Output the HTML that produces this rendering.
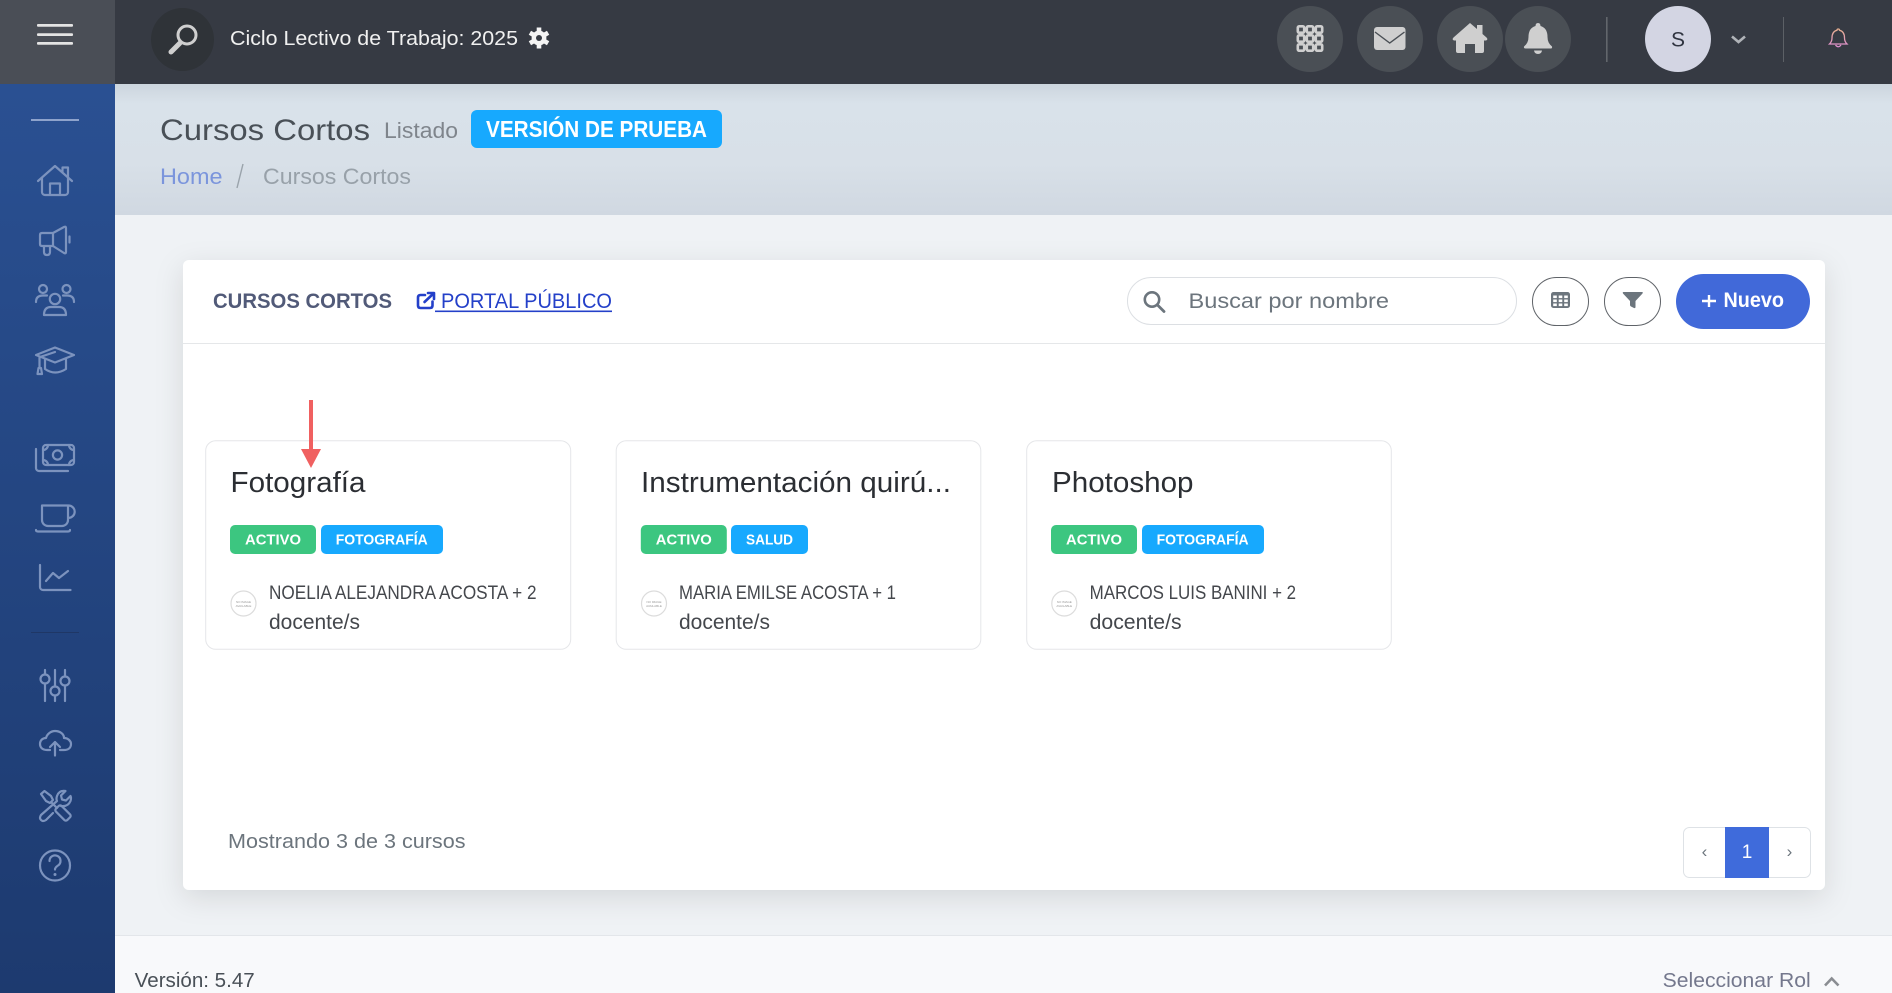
<!DOCTYPE html>
<html lang="es"><head><meta charset="utf-8"><title>Cursos Cortos</title>
<style>
html,body{margin:0;padding:0;width:1892px;height:993px;overflow:hidden;background:#eff2f5}
svg{display:block;position:absolute;left:0;top:0}
text{font-family:"Liberation Sans",sans-serif;white-space:pre}
.b{font-weight:700}
.si{fill:none;stroke:#7c93be;stroke-width:2.2;stroke-linecap:round;stroke-linejoin:round}
.card{fill:#fff;stroke:#e5e6e9;stroke-width:1}
.tt{font-size:28.5px;fill:#2b2e33}
.bd{font-size:15px;font-weight:700;fill:#fff}
.nm{font-size:19.5px;fill:#44474c}
.dc{font-size:21px;fill:#44474c}
.tiny{font-size:3px;fill:#999}
</style></head><body>
<svg width="1892" height="993" viewBox="0 0 1892 993" xmlns="http://www.w3.org/2000/svg">
<defs>
<linearGradient id="side" x1="0" y1="0" x2="0" y2="1"><stop offset="0" stop-color="#2a5092"/><stop offset="1" stop-color="#1d3a6f"/></linearGradient>
<linearGradient id="head" x1="0" y1="0" x2="0" y2="1"><stop offset="0" stop-color="#ccd5de"/><stop offset=".15" stop-color="#d9e2ea"/><stop offset=".6" stop-color="#d8e0e8"/><stop offset="1" stop-color="#d0d8e1"/></linearGradient>
<linearGradient id="pink" x1="0" y1="0" x2="0" y2="1"><stop offset="0" stop-color="#e8b08f"/><stop offset="1" stop-color="#de8fd0"/></linearGradient>
<filter id="sh" x="-5%" y="-10%" width="110%" height="125%"><feDropShadow dx="0" dy="8" stdDeviation="14" flood-color="#000" flood-opacity=".11"/></filter>
</defs>

<!-- backgrounds -->
<rect x="115" y="84" width="1777" height="852" fill="#eff2f5"/>
<rect x="115" y="84" width="1777" height="131" fill="url(#head)"/>
<rect x="115" y="935.5" width="1777" height="57.5" fill="#f8f9fb"/>
<rect x="115" y="935" width="1777" height="1" fill="#e3e6ea"/>
<rect x="0" y="84" width="115" height="909" fill="url(#side)"/>
<rect x="0" y="0" width="1892" height="84" fill="#363a43"/>
<rect x="0" y="0" width="115" height="84" fill="#4a4e56"/>

<!-- top bar left -->
<g fill="#e4e4e4"><rect x="37" y="24" width="36" height="2.8" rx="1"/><rect x="37" y="33.2" width="36" height="2.8" rx="1"/><rect x="37" y="42" width="36" height="2.8" rx="1"/></g>
<circle cx="182.5" cy="39.5" r="31.5" fill="#2f3338"/>
<circle cx="187" cy="35" r="9" fill="none" stroke="#cfcfcf" stroke-width="3"/>
<path d="M180 43 L171 52" stroke="#cfcfcf" stroke-width="5" stroke-linecap="round"/>
<text x="230" y="45" font-size="20.5" fill="#f0f0f0" textLength="288" lengthAdjust="spacingAndGlyphs">Ciclo Lectivo de Trabajo: 2025</text>
<g transform="translate(539 38)">
<g stroke="#f4f4f4" stroke-width="4.6" stroke-linecap="butt"><path d="M0 -10.5V10.5"/><path d="M-9.1 -5.25L9.1 5.25"/><path d="M-9.1 5.25L9.1 -5.25"/></g>
<circle r="7.4" fill="#f4f4f4"/><circle r="3" fill="#363a43"/></g>

<!-- top bar right -->
<g fill="#4a4f55"><circle cx="1310" cy="39" r="33"/><circle cx="1390" cy="39" r="33"/><circle cx="1470" cy="39" r="33"/><circle cx="1538" cy="39" r="33"/></g>
<g fill="none" stroke="#cfcfcf" stroke-width="2.6">
<rect x="1297.8" y="26.3" width="6.4" height="6.4" rx="1.3"/><rect x="1306.8" y="26.3" width="6.4" height="6.4" rx="1.3"/><rect x="1315.8" y="26.3" width="6.4" height="6.4" rx="1.3"/>
<rect x="1297.8" y="35.3" width="6.4" height="6.4" rx="1.3"/><rect x="1306.8" y="35.3" width="6.4" height="6.4" rx="1.3"/><rect x="1315.8" y="35.3" width="6.4" height="6.4" rx="1.3"/>
<rect x="1297.8" y="44.3" width="6.4" height="6.4" rx="1.3"/><rect x="1306.8" y="44.3" width="6.4" height="6.4" rx="1.3"/><rect x="1315.8" y="44.3" width="6.4" height="6.4" rx="1.3"/>
</g>
<rect x="1374" y="27" width="31.5" height="23" rx="3" fill="#cfcfcf"/>
<path d="M1375 32 L1389.7 43 L1404.5 32" fill="none" stroke="#4a4f55" stroke-width="1.4"/>
<path fill="#cfcfcf" d="M1470 23 L1477 29 V25 H1482.5 V34 L1486.5 37.5 Q1488.5 39.5 1486 40.5 H1484 V51 Q1484 53 1482 53 H1475 V44 H1465 V53 H1458 Q1456 53 1456 51 V40.5 H1454 Q1451.5 39.5 1453.5 37.5 Z"/>
<path fill="#cfcfcf" d="M1538 23 Q1540.5 23 1540.5 26 Q1547.5 28 1547.5 37 Q1547.5 43 1552 46.5 Q1552.5 48.5 1550.5 48.5 H1525.5 Q1523.5 48.5 1524 46.5 Q1528.5 43 1528.5 37 Q1528.5 28 1535.5 26 Q1535.5 23 1538 23 Z"/>
<path fill="#cfcfcf" d="M1534 50.5 H1542 Q1541.5 54 1538 54 Q1534.5 54 1534 50.5 Z"/>
<rect x="1606" y="17" width="1.6" height="45" fill="#62666c"/>
<circle cx="1678" cy="39" r="33" fill="#d3d5e3"/>
<text x="1678" y="46.5" font-size="21" fill="#2f3440" text-anchor="middle">S</text>
<path d="M1732 36.5 L1738.5 42 L1745 36.5" fill="none" stroke="#b0b3b8" stroke-width="2.6"/>
<rect x="1783" y="17" width="1" height="45" fill="#5c6066"/>
<path d="M1838.2 29 Q1839.5 29 1839.5 30.3 Q1844.5 31.5 1844.5 38 Q1844.5 41.5 1847 44 H1829.5 Q1832 41.5 1832 38 Q1832 31.5 1837 30.3 Q1837 29 1838.2 29 Z M1835.5 45 Q1838.2 48.5 1841 45" fill="none" stroke="url(#pink)" stroke-width="1.3"/>

<!-- sidebar -->
<rect x="31" y="119" width="48" height="2" fill="#8ea3cc"/>
<g class="si">
<path d="M38 181 L55 166 L72 181 M62.5 172.5 V167.5 H68 V177.5 M42 178 V192 a3 3 0 0 0 3 3 H65 a3 3 0 0 0 3-3 V178 M50 195 V183.5 H60 V195"/>
<path d="M53 233 L64 227 Q66 226 66 228 V252 Q66 254 64 253 L53 246 H42 Q40 246 40 244 V235 Q40 233 42 233 Z M53 233 V246 M44 246 V252 Q44 255 47 255 Q50 255 50 252 V246.5 M69.5 236.5 V242.5"/>
<circle cx="43" cy="289" r="4"/><circle cx="66.5" cy="289" r="4"/><circle cx="55" cy="299" r="5.2"/>
<path d="M44 315 Q44 307 51 307 H59 Q66 307 66 315 Z M36 302 Q36 295.5 43 295.5 H47 M74 302 Q74 295.5 67 295.5 H63"/>
<path d="M36 355 L55 347.5 L74 355 L55 362.5 Z M45 359.5 V369 Q55 376 66 369 V359.5 M40 357 L55 352 M39.5 357 V368 M37.5 374 L38.5 368 H41 L42 374 Z"/>
<rect x="43" y="445" width="31" height="20" rx="3"/><circle cx="57.5" cy="455" r="4.6"/>
<path d="M43 450 a5 5 0 0 0 5-5 M74 450 a5 5 0 0 1-5-5 M43 460 a5 5 0 0 1 5 5 M74 460 a5 5 0 0 0-5 5 M36 449 V468 a3 3 0 0 0 3 3 H68"/>
<path d="M42 505.5 H68 V520 a6 6 0 0 1-6 6 H48 a6 6 0 0 1-6-6 Z M68 505.5 H68.5 a6.2 6.2 0 0 1 0 12.4 H68 M36 530 Q36 531.5 38 531.5 H68 Q70 531.5 70 530"/>
<path d="M40 565 V587 a3 3 0 0 0 3 3 H70.5 M46 581 L53 573 L59 578 L68 571"/>
<path d="M45 670 V674.5 M45 683.5 V701 M55 670 V686.5 M55 695.5 V701 M65 670 V676.5 M65 685.5 V701"/>
<circle cx="45" cy="679" r="4.5"/><circle cx="55" cy="691" r="4.5"/><circle cx="65" cy="681" r="4.5"/>
<path d="M50 750 H47 C42 750 40 747 40 744 C40 740 43 738 46 738 C47 734 51 731 55 731 C60 731 64 734 64 738 C68 738 71 741 71 744 C71 748 68 750 64 750 H60 M55 755.5 V742 M50 747 L55 742 L60 747"/>
<path d="M41 794 L44.5 791 L51 796 L53 800 L50 803 L46 801 Z M52 803 L57 808"/>
<rect x="55" y="809" width="16" height="8" rx="2" transform="rotate(45 63 813)"/>
<path d="M70.5 796 L66 800.5 L62 799.5 L61 795.5 L65.5 791 Q59 790 57 796 Q56 799 57 801 L41 815 Q39 818 41 820 Q43 822 46 820 L53 813 M61 806 Q68 807 70.5 801 Q71.5 798 70.5 796"/>
<circle cx="55" cy="865.5" r="15"/>
<path d="M49.5 861 a5.5 5.5 0 1 1 8.5 4.5 q-3 2 -3 4"/>
</g>
<circle cx="55" cy="874.5" r="1.5" fill="#7c93be"/>
<rect x="31" y="632" width="48" height="1" fill="#1f3766"/>

<!-- page header -->
<text x="160" y="140" font-size="30" fill="#495057" textLength="210" lengthAdjust="spacingAndGlyphs">Cursos Cortos</text>
<text x="384" y="138" font-size="22" fill="#7f858c" textLength="74" lengthAdjust="spacingAndGlyphs">Listado</text>
<rect x="471" y="110" width="251" height="38" rx="6" fill="#17a9fe"/>
<text x="486" y="137" font-size="23" class="b" fill="#fff" textLength="221" lengthAdjust="spacingAndGlyphs">VERSIÓN DE PRUEBA</text>
<text x="160" y="184" font-size="22" fill="#7b95dc" textLength="62.5" lengthAdjust="spacingAndGlyphs">Home</text>
<path d="M243 164 L237 188" stroke="#9aa3ab" stroke-width="1.4"/>
<text x="263" y="184" font-size="22" fill="#98a1a9" textLength="148" lengthAdjust="spacingAndGlyphs">Cursos Cortos</text>

<!-- main card -->
<rect x="183" y="260" width="1642" height="630" rx="6" fill="#fff" filter="url(#sh)"/>
<rect x="183" y="343" width="1642" height="1" fill="#e5e7e9"/>
<text x="213" y="308" font-size="21.5" class="b" fill="#515a78" textLength="179" lengthAdjust="spacingAndGlyphs">CURSOS CORTOS</text>
<g fill="none" stroke="#2440c9" stroke-width="2.6" stroke-linecap="round" stroke-linejoin="round">
<path d="M425 295 H420.5 Q418 295 418 297.5 V305.5 Q418 308 420.5 308 H430 Q432.5 308 432.5 305.5 V301.5"/>
<path d="M424.5 302 L433.5 293.5 M428 293 H434 V299"/>
</g>
<text x="441" y="308" font-size="21.5" fill="#2440c9" textLength="171" lengthAdjust="spacingAndGlyphs">PORTAL PÚBLICO</text>
<rect x="435" y="310.5" width="177" height="1.6" fill="#2440c9"/>

<rect x="1127.5" y="277.5" width="389" height="47" rx="23.5" fill="#fff" stroke="#dcdfe3"/>
<circle cx="1152" cy="299.5" r="7.2" fill="none" stroke="#6c757d" stroke-width="2.6"/>
<path d="M1157.5 305 L1164 311.5" stroke="#6c757d" stroke-width="2.8" stroke-linecap="round"/>
<text x="1188.5" y="308" font-size="21.5" fill="#6c757d" textLength="200.5" lengthAdjust="spacingAndGlyphs">Buscar por nombre</text>

<rect x="1532.5" y="277.5" width="56" height="48" rx="24" fill="#fff" stroke="#5f6368"/>
<rect x="1551" y="292" width="19" height="16" rx="2.5" fill="#6c757d"/>
<g fill="#fff"><rect x="1553.2" y="295.5" width="3.6" height="2.6"/><rect x="1558.7" y="295.5" width="3.6" height="2.6"/><rect x="1564.2" y="295.5" width="3.6" height="2.6"/><rect x="1553.2" y="299.5" width="3.6" height="2.6"/><rect x="1558.7" y="299.5" width="3.6" height="2.6"/><rect x="1564.2" y="299.5" width="3.6" height="2.6"/><rect x="1553.2" y="303.5" width="3.6" height="2.6"/><rect x="1558.7" y="303.5" width="3.6" height="2.6"/><rect x="1564.2" y="303.5" width="3.6" height="2.6"/></g>
<rect x="1604.5" y="277.5" width="56" height="48" rx="24" fill="#fff" stroke="#5f6368"/>
<path d="M1623.5 292 H1642 Q1643.3 292 1642.5 293.5 L1635.5 301 V307 Q1635.5 308.5 1634 308 L1631 306.5 Q1630 306 1630 305 V301 L1623 293.5 Q1622.3 292 1623.5 292 Z" fill="#6c757d"/>
<rect x="1676" y="274" width="134" height="55" rx="27.5" fill="#4169d9"/>
<path d="M1709 295 V307 M1702 301 H1716" stroke="#fff" stroke-width="2.4"/>
<text x="1723.5" y="307" font-size="21" fill="#fff" textLength="60.5" lengthAdjust="spacingAndGlyphs" style="font-weight:700">Nuevo</text>

<!-- course cards -->
<rect class="card" x="205.7" y="440.7" width="365" height="208.6" rx="10"/>
<rect class="card" x="616.2" y="440.7" width="364.6" height="208.6" rx="10"/>
<rect class="card" x="1026.7" y="440.7" width="364.6" height="208.6" rx="10"/>

<text class="tt" x="230.5" y="492" textLength="135" lengthAdjust="spacingAndGlyphs">Fotografía</text>
<text class="tt" x="641" y="492" textLength="310" lengthAdjust="spacingAndGlyphs">Instrumentación quirú...</text>
<text class="tt" x="1052" y="492" textLength="141.5" lengthAdjust="spacingAndGlyphs">Photoshop</text>

<rect x="230" y="525" width="86" height="29" rx="5" fill="#3cc680"/>
<text class="bd" x="245" y="544.5" textLength="56" lengthAdjust="spacingAndGlyphs">ACTIVO</text>
<rect x="321" y="525" width="122" height="29" rx="5" fill="#17a9fe"/>
<text class="bd" x="335.7" y="544.5" textLength="92" lengthAdjust="spacingAndGlyphs">FOTOGRAFÍA</text>

<rect x="640.8" y="525" width="86" height="29" rx="5" fill="#3cc680"/>
<text class="bd" x="655.8" y="544.5" textLength="56" lengthAdjust="spacingAndGlyphs">ACTIVO</text>
<rect x="731" y="525" width="77" height="29" rx="5" fill="#17a9fe"/>
<text class="bd" x="746" y="544.5" textLength="47" lengthAdjust="spacingAndGlyphs">SALUD</text>

<rect x="1051" y="525" width="86" height="29" rx="5" fill="#3cc680"/>
<text class="bd" x="1066" y="544.5" textLength="56" lengthAdjust="spacingAndGlyphs">ACTIVO</text>
<rect x="1142" y="525" width="122" height="29" rx="5" fill="#17a9fe"/>
<text class="bd" x="1156.6" y="544.5" textLength="92" lengthAdjust="spacingAndGlyphs">FOTOGRAFÍA</text>

<g fill="#fff" stroke="#dcdcdc" stroke-width="1.2"><circle cx="243.5" cy="603.5" r="12.5"/><circle cx="654" cy="603.5" r="12.5"/><circle cx="1064.3" cy="603.5" r="12.5"/></g>
<text class="tiny" x="243.5" y="603" text-anchor="middle">NO IMAGE</text><text class="tiny" x="243.5" y="607" text-anchor="middle">AVAILABLE</text>
<text class="tiny" x="654" y="603" text-anchor="middle">NO IMAGE</text><text class="tiny" x="654" y="607" text-anchor="middle">AVAILABLE</text>
<text class="tiny" x="1064.3" y="603" text-anchor="middle">NO IMAGE</text><text class="tiny" x="1064.3" y="607" text-anchor="middle">AVAILABLE</text>

<text class="nm" x="269" y="599" textLength="267.5" lengthAdjust="spacingAndGlyphs">NOELIA ALEJANDRA ACOSTA + 2</text>
<text class="dc" x="269" y="629" textLength="91" lengthAdjust="spacingAndGlyphs">docente/s</text>
<text class="nm" x="679" y="599" textLength="217" lengthAdjust="spacingAndGlyphs">MARIA EMILSE ACOSTA + 1</text>
<text class="dc" x="679" y="629" textLength="91" lengthAdjust="spacingAndGlyphs">docente/s</text>
<text class="nm" x="1089.6" y="599" textLength="206.5" lengthAdjust="spacingAndGlyphs">MARCOS LUIS BANINI + 2</text>
<text class="dc" x="1089.6" y="629" textLength="92" lengthAdjust="spacingAndGlyphs">docente/s</text>

<!-- arrow -->
<rect x="309" y="400" width="4" height="50" fill="#f06060"/>
<path d="M301 449 H321 L311 468 Z" fill="#f06060"/>

<!-- bottom of card -->
<text x="228" y="848" font-size="20.5" fill="#6c757d" textLength="237.5" lengthAdjust="spacingAndGlyphs">Mostrando 3 de 3 cursos</text>
<rect x="1683.5" y="827.5" width="127" height="50" rx="6" fill="#fff" stroke="#dee2e6"/>
<rect x="1725" y="827" width="44" height="51" fill="#3f6bdb"/>
<text x="1747" y="858" font-size="19" fill="#fff" text-anchor="middle">1</text>
<text x="1704.5" y="857" font-size="17" fill="#6c757d" text-anchor="middle">‹</text>
<text x="1789.5" y="857" font-size="17" fill="#6c757d" text-anchor="middle">›</text>

<!-- footer -->
<text x="134.7" y="987" font-size="20.5" fill="#495057" textLength="120" lengthAdjust="spacingAndGlyphs">Versión: 5.47</text>
<text x="1662.7" y="987" font-size="20.5" fill="#74788d" textLength="148" lengthAdjust="spacingAndGlyphs">Seleccionar Rol</text>
<path d="M1825 985.5 L1831.7 978.5 L1838.5 985.5" fill="none" stroke="#8a8d92" stroke-width="2.6"/>
</svg>
</body></html>
